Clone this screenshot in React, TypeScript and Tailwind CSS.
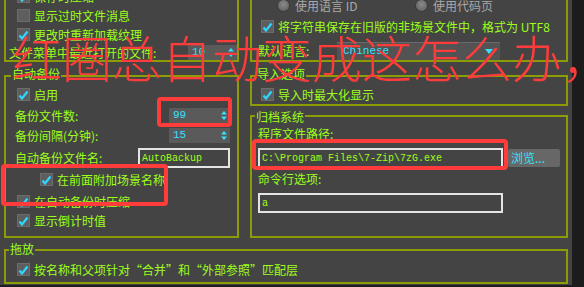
import React from "react";

type Kids = { children?: React.ReactNode; className?: string };

function Check({ on = true }: { on?: boolean }) {
  return (
    <span className="w-[13px] h-[13px] shrink-0 bg-[#5e5e5e] border border-[#6c6c6c] flex items-center justify-center">
      {on && (
        <svg width="11" height="10" viewBox="0 0 11 10">
          <path d="M1.5 5.5 L4 8.5 L9.5 1.5" fill="none" stroke="#2fd6ff" strokeWidth="2.2" />
        </svg>
      )}
    </span>
  );
}

function CheckRow({ label, on = true, className = "" }: { label: string; on?: boolean; className?: string }) {
  return (
    <div className={`flex items-center gap-[4px] h-[13px] ${className}`}>
      <Check on={on} />
      <span className="text-[12px] leading-[13px] whitespace-nowrap">{label}</span>
    </div>
  );
}

function Radio({ label }: { label: string }) {
  return (
    <div className="flex items-center gap-[5px]">
      <span className="w-[13px] h-[13px] rounded-full bg-[radial-gradient(circle_at_50%_40%,#8a8a8a,#5a5a5a)] border border-[#3a3a3a]" />
      <span className="text-[12px] leading-[13px] text-[#a9a9a9] whitespace-nowrap">{label}</span>
    </div>
  );
}

function Spin({ value, className = "" }: { value: string; className?: string }) {
  return (
    <div className={`h-[15px] bg-[#5a5a5a] flex items-center justify-between pl-[4px] pr-[3px] ${className}`}>
      <span className="font-['Liberation_Mono'] text-[11px] leading-none text-[#36e0ff]">{value}</span>
      <svg width="6" height="9" viewBox="0 0 6 9">
        <path d="M3 0 L6 3.5 L0 3.5Z M0 5.5 L6 5.5 L3 9Z" fill="#36e0ff" />
      </svg>
    </div>
  );
}

function Field({ value, className = "" }: { value: string; className?: string }) {
  return (
    <div className={`h-[20px] border-2 border-[#e4e4e4] bg-[#444444] flex items-center pl-[2px] font-['Liberation_Mono'] text-[10px] whitespace-nowrap ${className}`}>
      {value}
    </div>
  );
}

function Title({ children, className = "" }: Kids) {
  return (
    <div className={`h-[14px] leading-[14px] px-[1px] w-fit bg-[#444444] text-[12px] ${className}`}>{children}</div>
  );
}

function Left() {
  return (
    <div className="w-[240px] flex flex-col shrink-0">
      <div className="ml-[4px] w-[235px] h-[75px] border-x-2 border-b-2 border-[#8d9b05] flex flex-col">
        <CheckRow label="保存时压缩" className="mt-[3px] pl-[11px]" />
        <CheckRow label="显示过时文件消息" on={false} className="mt-[6px] pl-[11px]" />
        <CheckRow label="更改时重新加载纹理" className="mt-[6px] pl-[11px]" />
        <div className="mt-[4px] h-[15px] flex items-center justify-between pl-[3px]">
          <span className="text-[12px] whitespace-nowrap">文件菜单中最近打开的文件:</span>
          <Spin value="10" className="w-[49px]" />
        </div>
      </div>

      <div className="ml-[4px] mt-[13px] w-[235px] h-[163px] border-2 border-[#8d9b05] flex flex-col">
        <Title className="-mt-[10px] ml-[5px]">自动备份</Title>
        <CheckRow label="启用" className="mt-[7px] pl-[11px]" />
        <div className="mt-[7px] h-[15px] flex items-center justify-between pl-[9px] pr-[7px]">
          <span className="text-[12px] whitespace-nowrap">备份文件数:</span>
          <Spin value="99" className="w-[61px]" />
        </div>
        <div className="mt-[5px] h-[15px] flex items-center justify-between pl-[9px] pr-[7px]">
          <span className="text-[12px] whitespace-nowrap">备份间隔(分钟):</span>
          <Spin value="15" className="w-[61px]" />
        </div>
        <div className="mt-[5px] h-[20px] flex items-center justify-between pl-[9px] pr-[7px]">
          <span className="text-[12px] whitespace-nowrap">自动备份文件名:</span>
          <Field value="AutoBackup" className="w-[92px]" />
        </div>
        <CheckRow label="在前面附加场景名称" className="mt-[5px] pl-[34px]" />
        <CheckRow label="在自动备份时压缩" className="mt-[9px] pl-[11px]" />
        <CheckRow label="显示倒计时值" className="mt-[6px] pl-[11px]" />
      </div>
    </div>
  );
}

function Right() {
  return (
    <div className="w-[332px] flex flex-col shrink-0">
      <div className="ml-[10px] w-[318px] h-[75px] border-x-2 border-b-2 border-[#8d9b05] flex flex-col">
        <div className="mt-[12px] h-[13px] flex items-center pl-[25px]">
          <div className="w-[138px]">
            <Radio label="使用语言 ID" />
          </div>
          <Radio label="使用代码页" />
        </div>
        <CheckRow label="将字符串保存在旧版的非场景文件中，格式为 UTF8" className="mt-[8px] pl-[9px]" />
        <div className="mt-[9px] h-[18px] flex items-center pl-[6px]">
          <span className="w-[79px] text-[12px] whitespace-nowrap">默认语言:</span>
          <div className="w-[163px] h-[18px] bg-[#535353] border-t border-[#6a6a6a] flex items-center justify-between pl-[6px] pr-[7px]">
            <span className="font-['Liberation_Mono'] text-[11px] text-[#36e0ff]">Chinese</span>
            <svg width="8" height="5" viewBox="0 0 8 5">
              <path d="M0 0 L8 0 L4 5Z" fill="#36e0ff" />
            </svg>
          </div>
        </div>
      </div>

      <div className="ml-[10px] mt-[13px] w-[318px] h-[31px] border-2 border-[#8d9b05] flex flex-col">
        <Title className="-mt-[10px] ml-[4px]">导入选项</Title>
        <CheckRow label="导入时最大化显示" className="mt-[7px] pl-[9px]" />
      </div>

      <div className="ml-[10px] mt-[9px] w-[318px] h-[123px] border-2 border-[#8d9b05] flex flex-col">
        <Title className="-mt-[7px] ml-[3px]">归档系统</Title>
        <div className="mt-[3px] h-[14px] pl-[6px] text-[12px] leading-[14px]">程序文件路径:</div>
        <div className="mt-[7px] flex items-center pl-[6px]">
          <Field value="C:\Program Files\7-Zip\7zG.exe" className="w-[245px]" />
          <div className="ml-[5px] w-[52px] h-[18px] rounded-[2px] bg-[#676767] flex items-center pl-[3px] text-[12px] text-[#36e0ff]">
            浏览...
          </div>
        </div>
        <div className="mt-[4px] h-[14px] pl-[6px] text-[12px] leading-[14px]">命令行选项:</div>
        <div className="mt-[7px] pl-[6px]">
          <Field value="a" className="w-[245px]" />
        </div>
      </div>
    </div>
  );
}

export default function App() {
  return (
    <div className="w-[584px] h-[287px] bg-[#1c1c1c] relative overflow-hidden font-['Noto_Sans_CJK_SC',sans-serif] text-[#9dff1a]">
      <div className="w-[572px] h-[285px] bg-[#444444] overflow-hidden flex flex-col">
        <div className="-mt-[13px] flex">
          <Left />
          <Right />
        </div>
        <div className="ml-[4px] mt-[11px] w-[564px] h-[35px] border-2 border-[#8d9b05] flex flex-col">
          <Title className="-mt-[9px] ml-[3px]">拖放</Title>
          <CheckRow label="按名称和父项针对“合并”和“外部参照”匹配层" className="mt-[7px] pl-[11px]" />
        </div>
      </div>

      <div className="absolute left-[12px] top-[31px] text-[50px] leading-[50px] text-[#ff3c3c] font-light whitespace-nowrap pointer-events-none">
        红圈总自动变成这怎么办，
      </div>
      <div className="absolute left-[157px] top-[97px] w-[75px] h-[30px] border-4 border-[#ff3c3c] rounded-[4px]" />
      <div className="absolute left-[1px] top-[164px] w-[167px] h-[42px] border-4 border-[#ff3c3c] rounded-[4px]" />
      <div className="absolute left-[252px] top-[139px] w-[256px] h-[31px] border-4 border-[#ff3c3c] rounded-[4px]" />
    </div>
  );
}
